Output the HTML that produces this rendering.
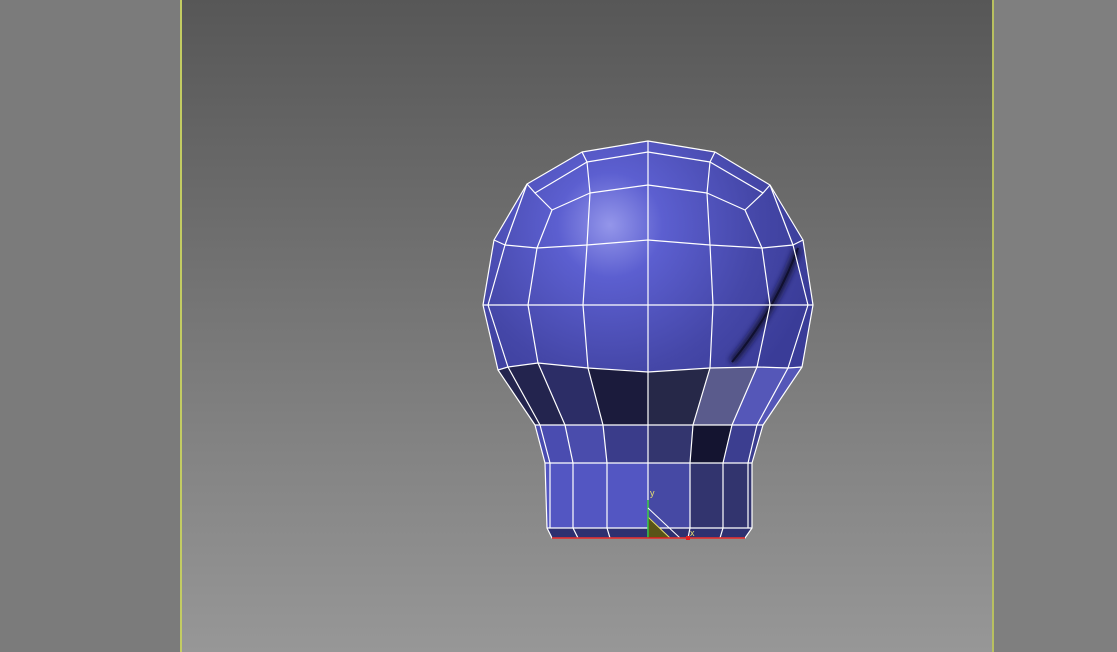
<!DOCTYPE html>
<html><head><meta charset="utf-8"><style>
html,body{margin:0;padding:0;width:1117px;height:652px;overflow:hidden;background:#7d7d7d}
svg{display:block}
</style></head><body>
<svg width="1117" height="652" viewBox="0 0 1117 652" xmlns="http://www.w3.org/2000/svg">
<defs>
<linearGradient id="bg" x1="0" y1="0" x2="0" y2="1">
<stop offset="0" stop-color="#575757"/><stop offset="1" stop-color="#979797"/>
</linearGradient>
<radialGradient id="sph" cx="610" cy="225" r="210" gradientUnits="userSpaceOnUse">
<stop offset="0" stop-color="#9496ea"/><stop offset="0.25" stop-color="#5c5fd0"/>
<stop offset="0.7" stop-color="#4547a8"/><stop offset="1" stop-color="#3a3c98"/>
</radialGradient>
<filter id="bl"><feGaussianBlur stdDeviation="3"/></filter>
</defs>
<rect x="0" y="0" width="181" height="652" fill="#7b7b7b"/>
<rect x="994" y="0" width="123" height="652" fill="#7f7f7f"/>
<rect x="182" y="0" width="811" height="652" fill="url(#bg)"/>
<rect x="180" y="0" width="2" height="652" fill="#c3cc62"/>
<rect x="992" y="0" width="2" height="652" fill="#b8c060"/>

<polygon fill="url(#sph)" points="648,141 715,152 770,185 803,240 813,305 802,367 763,425 752,463 752,528 745,538 552,538 547,528 545,463 535,425 498,370 483,305 494,240 527,184 582,152"/>
<path d="M798,248 Q775,310 732,362" stroke="#16163a" stroke-width="7" fill="none" filter="url(#bl)"/>
<path d="M798,248 Q775,310 732,362" stroke="#101030" stroke-width="2" fill="none"/>
<polygon points="498,370 508,367 538,363 565,425 535,425" fill="#23244e"/>
<polygon points="538,363 588,368 603,425 565,425" fill="#2c2d66"/>
<polygon points="588,368 648,372 648,425 603,425" fill="#1b1b3c"/>
<polygon points="648,372 710,368 693,425 648,425" fill="#262848"/>
<polygon points="710,368 757,367 732,425 693,425" fill="#5a5b8c"/>
<polygon points="757,367 802,367 763,425 732,425" fill="#5557b8"/>
<polygon points="535,425 565,425 573,463 545,463" fill="#4a4cb0"/>
<polygon points="565,425 603,425 607,463 573,463" fill="#4a4cac"/>
<polygon points="603,425 648,425 648,463 607,463" fill="#3a3c8a"/>
<polygon points="648,425 693,425 690,463 648,463" fill="#33356e"/>
<polygon points="693,425 732,425 723,463 690,463" fill="#141430"/>
<polygon points="732,425 763,425 752,463 723,463" fill="#3c3e90"/>
<polygon points="545,463 648,463 648,528 547,528" fill="#5356c2"/>
<polygon points="648,463 690,463 690,528 648,528" fill="#4649a4"/>
<polygon points="690,463 752,463 752,528 690,528" fill="#32346e"/>
<polygon points="547,528 752,528 745,538 552,538" fill="#2e3070"/>

<g fill="none" stroke="#ffffff" stroke-width="1.2" stroke-linejoin="round">
<polygon points="648,141 715,152 770,185 803,240 813,305 802,367 763,425 752,463 752,528 745,538 552,538 547,528 545,463 535,425 498,370 483,305 494,240 527,184 582,152"/>
<polyline points="527,184 535,193 587,162 648,152 710,162 763,193 770,185"/>
<polyline points="535,193 552,210 590,193 648,185 707,193 745,210 763,193"/>
<polyline points="494,240 505,245 537,248 587,245 648,240 710,245 762,248 793,245 803,240"/>
<line x1="483" y1="305" x2="813" y2="305"/>
<polyline points="498,370 508,367 538,363 588,368 648,372 710,368 757,367 788,368 802,367"/>
<line x1="535" y1="425" x2="763" y2="425"/>
<line x1="545" y1="463" x2="752" y2="463"/>
<line x1="547" y1="528" x2="752" y2="528"/>
<polyline points="527,184 505,245 488,305 508,367 540,425 550,463 550,528"/>
<polyline points="552,210 537,248 528,305 538,363 565,425 573,463 573,528 578,538"/>
<polyline points="582,152 587,162 590,193 587,245 583,305 588,368 603,425 607,463 607,528 610,538"/>
<line x1="648" y1="141" x2="648" y2="538"/>
<polyline points="715,152 710,162 707,193 710,245 713,305 710,368 693,425 690,463 690,528 688,538"/>
<polyline points="745,210 762,248 770,305 757,367 732,425 723,463 723,528 720,538"/>
<polyline points="770,185 793,245 808,305 788,368 757,425 748,463 748,528"/>
</g>
<polygon points="648,517 648,538 670,538" fill="#5a5418" stroke="#e8e070" stroke-width="1"/>
<line x1="648" y1="500" x2="648" y2="538" stroke="#30c040" stroke-width="1.5"/>
<line x1="648" y1="508" x2="680" y2="538" stroke="#ffffff" stroke-width="1"/>
<line x1="552" y1="538" x2="745" y2="538" stroke="#e02020" stroke-width="1.5"/>
<rect x="686" y="536" width="4" height="4" fill="#e02020"/>
<text x="650" y="496" font-family="Liberation Sans, sans-serif" font-size="9" fill="#e8e070">y</text>
<text x="690" y="536" font-family="Liberation Sans, sans-serif" font-size="9" fill="#e8e070">x</text>
</svg>
</body></html>
